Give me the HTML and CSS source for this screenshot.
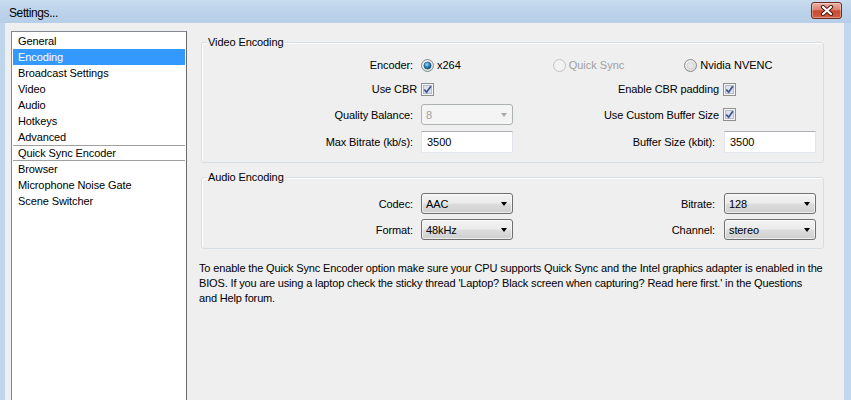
FILE: index.html
```html
<!DOCTYPE html>
<html>
<head>
<meta charset="utf-8">
<link rel="stylesheet" href="styles.css">
</head>
<body>
<div class="window">
  <div class="titlebar">
    <span class="title">Settings...</span>
    <button class="close" aria-label="Close">
      <svg width="14" height="11" viewBox="0 0 14 11"><path d="M3 2 L11 9 M11 2 L3 9" stroke="#4a1a12" stroke-width="4.2" stroke-linecap="round"/><path d="M3 2 L11 9 M11 2 L3 9" stroke="#fff" stroke-width="2.2" stroke-linecap="round"/></svg>
    </button>
  </div>
  <div class="client">
    <ul class="nav">
      <li>General</li>
      <li class="sel">Encoding</li>
      <li>Broadcast Settings</li>
      <li>Video</li>
      <li>Audio</li>
      <li>Hotkeys</li>
      <li>Advanced</li>
      <li class="sep">Quick Sync Encoder</li>
      <li>Browser</li>
      <li>Microphone Noise Gate</li>
      <li>Scene Switcher</li>
    </ul>
    <div class="main">
      <section class="group video">
        <div class="legend">Video Encoding</div>
        <div class="grid vgrid">
          <span class="lbl">Encoder:</span>
          <div class="radios">
            <span class="radio"><svg width="13" height="13" viewBox="0 0 13 13"><defs><radialGradient id="rg1" cx="0.4" cy="0.35" r="0.8"><stop offset="0" stop-color="#ffffff"/><stop offset="1" stop-color="#d4d4d4"/></radialGradient><radialGradient id="dot" cx="0.4" cy="0.35" r="0.7"><stop offset="0" stop-color="#9fe0f8"/><stop offset="0.5" stop-color="#2a88bf"/><stop offset="1" stop-color="#10406a"/></radialGradient></defs><circle cx="6.5" cy="6.5" r="6" fill="url(#rg1)" stroke="#7e8a96"/><circle cx="6.5" cy="6.5" r="3.6" fill="url(#dot)" stroke="#1b4d73" stroke-width="0.6"/></svg>x264</span>
            <span class="radio disabled"><svg width="13" height="13" viewBox="0 0 13 13"><circle cx="6.5" cy="6.5" r="6" fill="#f2f2f2" stroke="#c2c2c2"/></svg>Quick Sync</span>
            <span class="radio"><svg width="13" height="13" viewBox="0 0 13 13"><defs><radialGradient id="rg2" cx="0.4" cy="0.35" r="0.8"><stop offset="0" stop-color="#ffffff"/><stop offset="1" stop-color="#d0d0d0"/></radialGradient></defs><circle cx="6.5" cy="6.5" r="6" fill="url(#rg2)" stroke="#8a8a8a"/><circle cx="6.5" cy="6.5" r="3.5" fill="#e6e6e6" stroke="#c8c8c8" stroke-width="0.6"/></svg>Nvidia NVENC</span>
          </div>

          <span class="lbl chk">Use CBR</span>
          <span class="cbox"><svg width="13" height="13" viewBox="0 0 13 13"><rect x="0.5" y="0.5" width="12" height="12" fill="#f6f6f6" stroke="#8e8f8f"/><rect x="2.5" y="2.5" width="8" height="8" fill="#dde3ec" stroke="#b5bcc7"/><path d="M3.3 6.6 L5.6 9.2 L9.9 3.2" fill="none" stroke="#3d5291" stroke-width="1.7"/></svg></span>
          <span class="lbl2 chk">Enable CBR padding</span>
          <span class="cbox r"><svg width="13" height="13" viewBox="0 0 13 13"><rect x="0.5" y="0.5" width="12" height="12" fill="#f6f6f6" stroke="#8e8f8f"/><rect x="2.5" y="2.5" width="8" height="8" fill="#dde3ec" stroke="#b5bcc7"/><path d="M3.3 6.6 L5.6 9.2 L9.9 3.2" fill="none" stroke="#3d5291" stroke-width="1.7"/></svg></span>

          <span class="lbl">Quality Balance:</span>
          <div class="combo disabled"><span>8</span><i class="arrow"></i></div>
          <span class="lbl2 chk">Use Custom Buffer Size</span>
          <span class="cbox r"><svg width="13" height="13" viewBox="0 0 13 13"><rect x="0.5" y="0.5" width="12" height="12" fill="#f6f6f6" stroke="#8e8f8f"/><rect x="2.5" y="2.5" width="8" height="8" fill="#dde3ec" stroke="#b5bcc7"/><path d="M3.3 6.6 L5.6 9.2 L9.9 3.2" fill="none" stroke="#3d5291" stroke-width="1.7"/></svg></span>

          <span class="lbl">Max Bitrate (kb/s):</span>
          <div class="input">3500</div>
          <span class="lbl2">Buffer Size (kbit):</span>
          <div class="input">3500</div>
        </div>
      </section>

      <section class="group audio">
        <div class="legend">Audio Encoding</div>
        <div class="grid agrid">
          <span class="lbl">Codec:</span>
          <div class="combo"><span>AAC</span><i class="arrow"></i></div>
          <span class="lbl2">Bitrate:</span>
          <div class="combo"><span>128</span><i class="arrow"></i></div>

          <span class="lbl">Format:</span>
          <div class="combo"><span>48kHz</span><i class="arrow"></i></div>
          <span class="lbl2">Channel:</span>
          <div class="combo"><span>stereo</span><i class="arrow"></i></div>
        </div>
      </section>

      <p class="note">To enable the Quick Sync Encoder option make sure your CPU supports Quick Sync and the Intel graphics adapter is enabled in the<br>BIOS. If you are using a laptop check the sticky thread 'Laptop? Black screen when capturing? Read here first.' in the Questions<br>and Help forum.</p>
    </div>
  </div>
</div>
</body>
</html>
```

FILE: styles.css
```css
* { box-sizing: border-box; }
html, body { margin: 0; padding: 0; }
body {
  width: 851px;
  height: 400px;
  overflow: hidden;
  background: #bcd3eb;
  font-family: "Liberation Sans", Arial, sans-serif;
  font-size: 11px;
  color: #000;
}
.window {
  width: 851px;
  height: 400px;
  display: flex;
  flex-direction: column;
  overflow: hidden;
  background: linear-gradient(to right, #bed5ec, #b9d1ea 60%, #c2d8ee);
}
.titlebar {
  height: 23px;
  flex: none;
  display: flex;
  align-items: center;
  justify-content: space-between;
  padding: 0 9px 0 9px;
  background: linear-gradient(to bottom, #c9dcf0 0%, #bcd3ea 50%, #b6cee8 100%);
}
.title {
  font-size: 12px;
  letter-spacing: -0.4px;
  margin-top: 2px;
}
.close {
  width: 31px;
  height: 17px;
  margin-top: -2px;
  padding: 0;
  border: 1px solid #6e2a1e;
  border-radius: 3px;
  background: linear-gradient(to bottom, #eab0a4 0%, #dd8270 45%, #c84a30 52%, #cf5e44 100%);
  box-shadow: inset 0 0 0 1px rgba(255,255,255,0.35);
  display: flex;
  align-items: center;
  justify-content: center;
}
.client {
  flex: 1;
  margin: 0 7px 0 5px;
  background: #efefef;
  display: flex;
  padding: 8px 0 0 6px;
  min-height: 0;
  overflow: hidden;
}
.nav {
  list-style: none;
  margin: 0;
  padding: 1px 1px 0 1px;
  width: 176px;
  flex: none;
  height: 376px;
  background: #fff;
  border: 1px solid #828790;
  border-right-color: #6b6b6b;
}
.nav li {
  height: 16px;
  line-height: 16px;
  padding-left: 5px;
  white-space: nowrap;
  letter-spacing: -0.1px;
}
.nav li.sel {
  background: #3399ff;
  color: #fff;
}
.nav li.sep {
  border-top: 1px solid #a0a0a0;
  border-bottom: 1px solid #a0a0a0;
  line-height: 14px;
}
.main {
  flex: 1;
  padding: 11px 0 0 12px;
  min-width: 0;
}
.group {
  width: 623px;
  margin-left: 2px;
  border: 1px solid #d5dfe5;
  border-radius: 3px;
  box-shadow: inset 1px 1px 0 #fff;
}
.legend {
  display: table;
  margin: -8px 0 0 5px;
  padding: 0 1px;
  line-height: 14px;
  background: #efefef;
  letter-spacing: -0.1px;
}
.grid {
  display: grid;
  grid-template-columns: 219px 92px 211px 92px;
  padding-right: 7px;
  align-items: center;
}
.vgrid {
  margin-top: 7px;
  grid-template-rows: 18px 18px 21px 22px;
  row-gap: 6px;
  padding-bottom: 9px;
}
.audio { margin-top: 14px; }
.agrid {
  margin-top: 9px;
  grid-template-rows: 21px 21px;
  row-gap: 5px;
  padding-bottom: 8px;
}
.lbl, .lbl2 {
  text-align: right;
  white-space: nowrap;
  letter-spacing: -0.1px;
}
.lbl { padding-right: 8px; }
.lbl2 { padding-right: 9px; }
.lbl.chk { padding-right: 4px; }
.lbl2.chk { padding-right: 5px; }
.radios {
  grid-column: 2 / 5;
  display: flex;
}
.radio {
  width: 132px;
  display: flex;
  align-items: center;
  gap: 3px;
  white-space: nowrap;
}
.radio svg { flex: none; }
.radio.disabled { color: #a0a0a0; }
.cbox { display: flex; align-items: center; }
.cbox.r { margin-left: -1px; }
.combo {
  height: 21px;
  border: 1px solid #707070;
  border-radius: 3px;
  background: linear-gradient(to bottom, #f3f3f3 0%, #ebebeb 48%, #dddddd 52%, #cfcfcf 100%);
  box-shadow: inset 0 0 0 1px rgba(255,255,255,0.6);
  display: flex;
  align-items: center;
  justify-content: space-between;
  padding: 0 5px 0 4px;
}
.combo span { letter-spacing: -0.1px; }
.arrow {
  width: 0;
  height: 0;
  border-left: 3.5px solid transparent;
  border-right: 3.5px solid transparent;
  border-top: 4px solid #000;
}
.combo.disabled {
  border-color: #adb2b5;
  background: #f4f4f4;
  box-shadow: none;
  color: #a0a0a0;
}
.combo.disabled .arrow { border-top-color: #a8a8a8; }
.input {
  height: 22px;
  background: #fff;
  border: 1px solid #dbdfe6;
  border-top-color: #abadb3;
  border-left-color: #e2e3ea;
  border-right-color: #e2e3ea;
  border-bottom-color: #e3e9ef;
  padding-left: 5px;
  line-height: 20px;
}
.note {
  margin: 12px 0 0 0;
  line-height: 15px;
  white-space: nowrap;
  letter-spacing: -0.15px;
}
```
